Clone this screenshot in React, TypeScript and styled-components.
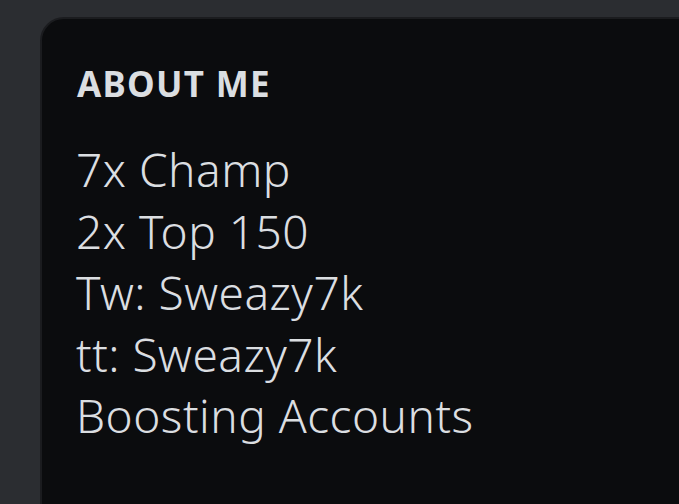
import React from "react";
import styled, { createGlobalStyle } from "styled-components";

const Global = createGlobalStyle`
  html, body { margin: 0; padding: 0; background: #2b2d31; overflow: hidden; }
  body { width: 679px; height: 504px; font-family: "Noto Sans", "Open Sans", sans-serif; }
`;

const Page = styled.div`
  width: 679px;
  height: 504px;
  padding: 17px 0 0 40px;
  box-sizing: border-box;
  overflow: hidden;
`;

const Card = styled.section`
  width: 700px;
  height: 560px;
  box-sizing: border-box;
  background: #0b0c0e;
  border: 2px solid #1b1c1f;
  border-radius: 24px;
  padding: 43px 0 0 34px;
`;

const Heading = styled.h2`
  margin: 0 0 33px 1px;
  font-size: 35px;
  line-height: 44px;
  font-weight: 700;
  letter-spacing: 1.3px;
  color: #dbdee1;
  text-transform: uppercase;
`;

const Body = styled.div`
  font-size: 46px;
  line-height: 61.5px;
  font-weight: 350;
  letter-spacing: 0.5px;
  color: #dbdee1;
  white-space: pre-line;
`;

export default function App() {
  return (
    <>
      <Global />
      <Page>
        <Card>
          <Heading>About me</Heading>
          <Body>
            {"7x Champ\n2x Top 150\nTw: Sweazy7k\ntt: Sweazy7k\nBoosting Accounts"}
          </Body>
        </Card>
      </Page>
    </>
  );
}
